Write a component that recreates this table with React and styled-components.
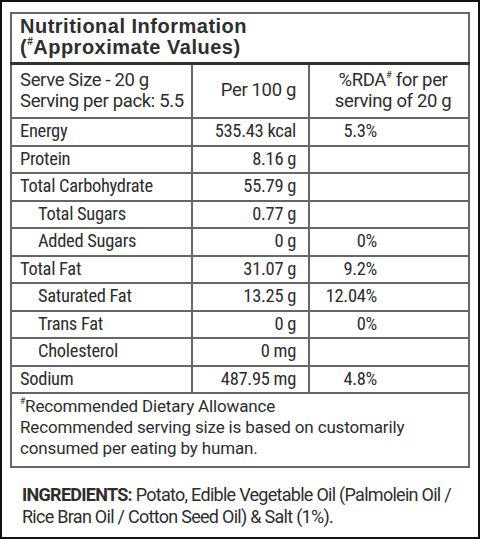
import styled, { createGlobalStyle } from "styled-components";

const GlobalStyle = createGlobalStyle`
  html, body {
    margin: 0;
    padding: 0;
    background: #ffffff;
  }
  * {
    box-sizing: border-box;
  }
`;

const body = `Roboto, "Liberation Sans", Arial, sans-serif`;

const rows = [
  { name: "Energy", value: "535.43 kcal", rda: "5.3%" },
  { name: "Protein", value: "8.16 g", rda: "" },
  { name: "Total Carbohydrate", value: "55.79 g", rda: "" },
  { name: "Total Sugars", value: "0.77 g", rda: "", sub: true },
  { name: "Added Sugars", value: "0 g", rda: "0%", sub: true },
  { name: "Total Fat", value: "31.07 g", rda: "9.2%" },
  { name: "Saturated Fat", value: "13.25 g", rda: "12.04%", sub: true },
  { name: "Trans Fat", value: "0 g", rda: "0%", sub: true },
  { name: "Cholesterol", value: "0 mg", rda: "", sub: true },
  { name: "Sodium", value: "487.95 mg", rda: "4.8%" },
];

const App = () => {
  return (
    <>
      <GlobalStyle />
      <Label>
        <Table>
          <colgroup>
            <col style={{ width: 181 }} />
            <col style={{ width: 117 }} />
            <col style={{ width: 160 }} />
          </colgroup>
          <tbody>
            <tr>
              <TitleCell colSpan={3}>
                Nutritional Information
                <br />(<Sup>#</Sup>Approximate Values)
              </TitleCell>
            </tr>
            <HeadRow>
              <HeadCell>
                Serve Size - 20 g
                <br />
                Serving per pack: 5.5
              </HeadCell>
              <HeadCell $align="right">Per 100 g</HeadCell>
              <HeadCell $align="center">
                %RDA<Sup>#</Sup> for per
                <br />
                serving of 20 g
              </HeadCell>
            </HeadRow>
            {rows.map((r) => (
              <DataRow key={r.name}>
                <Cell $sub={r.sub}>{r.name}</Cell>
                <ValueCell>{r.value}</ValueCell>
                <RdaCell>{r.rda}</RdaCell>
              </DataRow>
            ))}
            <tr>
              <NoteCell colSpan={3}>
                <Sup>#</Sup>Recommended Dietary Allowance
                <br />
                Recommended serving size is based on customarily
                <br />
                consumed per eating by human.
              </NoteCell>
            </tr>
          </tbody>
        </Table>
        <Ingredients>
          <strong>INGREDIENTS:</strong> Potato, Edible Vegetable Oil (Palmolein Oil /
          <br />
          Rice Bran Oil / Cotton Seed Oil) &amp; Salt (1%).
        </Ingredients>
      </Label>
    </>
  );
};

export default App;

const Label = styled.div`
  width: 480px;
  height: 539px;
  border: 2px solid #111;
  padding: 10px 11px 0 8px;
  background: #fff;
  color: #2d2d2d;
  font-family: ${body};
`;

const Table = styled.table`
  width: 458px;
  border-collapse: collapse;
  table-layout: fixed;
  border: 2px solid #666;
`;

const Sup = styled.sup`
  font-size: 0.5em;
  vertical-align: 0.9em;
  line-height: 0;
`;

const TitleCell = styled.td`
  height: 50px;
  padding: 2px 8px 3px;
  border-bottom: 3px solid #333;
  font-family: "Liberation Sans", Arial, sans-serif;
  font-weight: bold;
  font-size: 20px;
  letter-spacing: 0.5px;
  line-height: 21px;
  color: #2e2e2e;
  vertical-align: top;
`;

const Cell = styled.td`
  border: 2px solid #666;
  padding: 0 8px 0 ${(p) => (p.$sub ? "26px" : "8px")};
  font-size: 18.5px;
  font-stretch: 75%;
  letter-spacing: -0.3px;
  line-height: 21px;
  white-space: nowrap;
`;

const HeadRow = styled.tr`
  height: 55px;
`;

const HeadCell = styled(Cell)`
  font-stretch: 100%;
  letter-spacing: -0.35px;
  text-align: ${(p) => p.$align || "left"};
  padding: ${(p) =>
    p.$align === "right" ? "0 12px 0 8px" : p.$align === "center" ? "0 8px 0 16px" : "0 8px"};
`;

const DataRow = styled.tr`
  height: 27.5px;
`;

const ValueCell = styled(Cell)`
  text-align: right;
  padding-right: 12px;
`;

const RdaCell = styled(Cell)`
  text-align: right;
  padding-right: 91px;
`;

const NoteCell = styled.td`
  height: 74px;
  padding: 2px 8px 6px 8px;
  font-size: 17px;
  letter-spacing: -0.15px;
  line-height: 21px;
  vertical-align: top;
`;

const Ingredients = styled.p`
  margin: 16px 0 0 12px;
  font-size: 18px;
  letter-spacing: -0.72px;
  line-height: 22px;
  white-space: nowrap;

  strong {
    font-weight: bold;
  }
`;
